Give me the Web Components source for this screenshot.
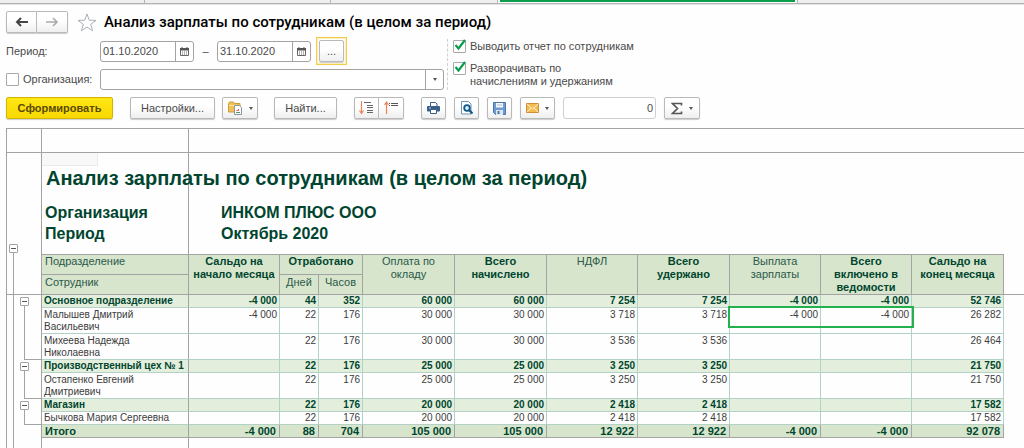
<!DOCTYPE html>
<html lang="ru">
<head>
<meta charset="utf-8">
<title>Анализ зарплаты по сотрудникам</title>
<style>
html,body{margin:0;height:100%}
body{font:11px/13px "Liberation Sans",Arial,sans-serif;color:#4a4a4a;background:#fefefe}
</style>
</head>
<body>
<salary-app></salary-app>
<script>
const define = (name, html, init) => {
  const tpl = document.createElement('template');
  tpl.innerHTML = html;
  customElements.define(name, class extends HTMLElement {
    constructor() {
      super();
      this.attachShadow({mode: 'open'}).append(tpl.content.cloneNode(true));
    }
    connectedCallback() { if (init) init.call(this, this.shadowRoot); }
  });
};

/* Strip of open windows above the form */
define('window-tabs', `
<style>
:host{display:flex;height:3px;background:#efefef;border-bottom:1px solid #b4b4b4;box-shadow:0 1px #e4e4e4}
i{box-sizing:border-box;flex:0 0 145px;border-right:1px solid #b4b4b4}
i.w{flex-basis:186px}
i.s{flex-basis:167px}
i.on{flex:0 0 300px;background:linear-gradient(#0b9c4c,#0b9c4c) 2px 0/calc(100% - 4px) 2px no-repeat,#fefefe}
</style><i></i><i class="w"></i><i class="s"></i><i class="on"></i>`);

/* Push button with a slot for its caption or icon */
define('tool-button', `
<style>
:host{display:block;flex:none}
button{box-sizing:border-box;width:100%;height:22px;padding:0 3px;display:flex;align-items:center;justify-content:center;gap:4px;
 font:inherit;color:#4a4a4a;background:linear-gradient(#fff 40%,#efefef);border:1px solid #b9b9b9;border-radius:2px;box-shadow:0 1px 1px #ccc}
:host([primary]) button{font-weight:bold;color:#5a4a00;background:linear-gradient(#ffe716,#f8d800);border-color:#d3b500}
:host([left]) button{border-radius:2px 0 0 2px}
:host([right]) button{border-radius:0 2px 2px 0;border-left:0}
.a{display:none;width:0;height:0;border:2px solid transparent;border-top:3px solid #555;border-bottom:0;margin-left:2px}
:host([menu]) .a{display:block}
</style><button type="button"><slot></slot><span class="a"></span></button>`,
function (r) {
  const t = this.getAttribute('title');
  if (t) r.querySelector('button').setAttribute('aria-label', t);
});

define('date-field', `
<style>
:host{box-sizing:border-box;display:flex;width:94px;height:21px;border:1px solid #a3a3a3;border-radius:3px;background:#fff;overflow:hidden}
input{flex:1;min-width:0;border:0;padding:0 0 0 2px;font:inherit;color:#4a4a4a;background:none;outline:0}
button{flex:0 0 18px;border:0;border-left:1px solid #a3a3a3;padding:0;background:none;display:grid;place-items:center}
</style><input type="text"><button type="button" aria-label="Календарь"><svg width="9" height="9" viewBox="0 0 9 9"><path d="M.5 1.5h8v7h-8z" fill="#fff" stroke="#666"/><path d="M0 1h9v2.5H0z" fill="#555"/><path d="M2 0v2M7 0v2" stroke="#555"/><path d="M2 5h5M2 7h5" stroke="#666" stroke-dasharray="1"/></svg></button>`,
function (r) {
  const i = r.querySelector('input');
  i.value = this.getAttribute('value');
  i.setAttribute('aria-label', this.getAttribute('label'));
});

define('check-field', `
<style>
:host{display:block}
label{display:flex;align-items:flex-start;gap:4px}
.b{position:relative;flex:0 0 13px;height:13px}
input{appearance:none;box-sizing:border-box;display:block;width:13px;height:13px;margin:0;border:1px solid #a9a9a9;border-radius:1px;background:#fff}
svg{display:none;position:absolute;left:1px;top:-1px;pointer-events:none}
input:checked+svg{display:block}
</style><label><span class="b"><input type="checkbox"><svg width="13" height="12" viewBox="0 0 13 12"><path d="M1.5 6l3 3.5L11 1" fill="none" stroke="#0b9c4c" stroke-width="2.2"/></svg></span><span><slot></slot></span></label>`,
function (r) { r.querySelector('input').checked = this.hasAttribute('checked'); });

define('report-header', `
<style>
:host{display:flex;align-items:center;padding:7px 6px 0}
.nav{display:flex;width:62px}
.nav tool-button{flex:1}
.star{margin:0 7px 0 9px;padding:0;border:0;background:none;display:flex}
h1{margin:0;font:500 15px/20px Roboto,"Liberation Sans",sans-serif;color:#000}
</style>
<div class="nav">
<tool-button left title="Назад"><svg width="14" height="10" viewBox="0 0 14 10"><path d="M13 5H3M6 1L2 5l4 4" fill="none" stroke="#444" stroke-width="2"/></svg></tool-button>
<tool-button right title="Вперед"><svg width="14" height="10" viewBox="0 0 14 10"><path d="M1 5h10M8 1l4 4-4 4" fill="none" stroke="#aaa" stroke-width="1.6"/></svg></tool-button>
</div>
<button class="star" type="button" aria-label="В избранное"><svg width="20" height="19" viewBox="0 0 20 19"><path d="M10 1l2.3 6.2 6.700.2-5.300 4 1.900 6.400L10 14l-5.600 3.800 1.900-6.400-5.300-4 6.700-.2z" fill="#fff" stroke="#a8b0b8"/></svg></button>
<h1>Анализ зарплаты по сотрудникам (в целом за период)</h1>`);

define('report-filters', `
<style>
:host{display:flex;padding:4px 6px 0}
.l{display:grid;grid-template-columns:94px 344px;grid-template-rows:28px 21px;row-gap:4px;align-items:center}
.row{display:flex;align-items:center}
.dash{width:23px;text-align:center}
.hot{margin-left:5px;padding:2px;border:1px solid #f2cd4a;box-shadow:inset 0 0 0 1px #fdf0bd}
.hot tool-button{width:25px}
select{appearance:none;box-sizing:border-box;width:100%;height:21px;border:1px solid #a3a3a3;border-radius:3px;font:inherit;
 background:linear-gradient(#a3a3a3,#a3a3a3) right 17px top/1px 100% no-repeat,#fff}
.sel{position:relative}
.sel::after{content:"";position:absolute;right:7px;top:9px;border:2px solid transparent;border-top:3px solid #555;border-bottom:0}
.r{display:flex;flex-direction:column;gap:9px;margin:2px 0 0 3px;padding:1px 0 0 5px;border-left:1px dashed #d0d0d0}
</style>
<div class="l">
 <span>Период:</span>
 <div class="row"><date-field label="Начало периода" value="01.10.2020"></date-field><span class="dash">–</span><date-field label="Конец периода" value="31.10.2020"></date-field><div class="hot"><tool-button>...</tool-button></div></div>
 <check-field>Организация:</check-field>
 <div class="sel"><select aria-label="Организация"><option></option></select></div>
</div>
<div class="r">
 <check-field checked>Выводить отчет по сотрудникам</check-field>
 <check-field checked>Разворачивать по<br>начислениям и удержаниям</check-field>
</div>`);

define('report-toolbar', `
<style>
:host{display:flex;align-items:center;padding:7px 6px 9px}
.n{box-sizing:border-box;width:93px;height:22px;margin-right:8px;border:1px solid #cfcfcf;border-radius:3px;padding:0 2px;text-align:right;font:inherit;color:#4a4a4a;background:#fff}
.w0{width:107px;margin-right:17px}.w1{width:85px;margin-right:7px}.w2{width:36px;margin-right:16px}.w3{width:63px;margin-right:17px}
.w4{width:25px}.g{margin-right:17px}.w5{width:25px;margin-right:8px}.w6{width:35px;margin-right:8px}.w7{width:36px}
</style>
<tool-button class="w0" primary>Сформировать</tool-button>
<tool-button class="w1">Настройки...</tool-button>
<tool-button class="w2" menu title="Варианты"><svg width="15" height="14" viewBox="0 0 15 14"><path d="M.5 2.500l1-1.500h4l1 1.500h5.500v8.500H.5z" fill="#eec25a" stroke="#cf9a35"/><path d="M1 4.500h10" stroke="#fbe3a4"/><path d="M6.500 4.500h5l2 2v7h-7z" fill="#fff" stroke="#8796a5"/><path d="M8 11.500h4" stroke="#4b9b62"/><path d="M8.500 9.500h2v-1.500" stroke="#d9534f" fill="none"/></svg></tool-button>
<tool-button class="w3">Найти...</tool-button>
<tool-button class="w4" left title="Развернуть группы"><svg width="15" height="14" viewBox="0 0 15 14"><path d="M2.500 0v12M.5 9.500l2 3 2-3" fill="none" stroke="#ee8456" stroke-width="1.200"/><path d="M5 1.500h7M8 4.500h6M8 6.500h6M8 9.500h6M8 11.500h6" stroke="#666"/></svg></tool-button>
<tool-button class="w4 g" right title="Свернуть группы"><svg width="15" height="14" viewBox="0 0 15 14"><path d="M2.500 13V1M.5 4l2-3 2 3" fill="none" stroke="#ee8456" stroke-width="1.200"/><path d="M5 2.500h1M7 2.500h7M5 4.500h1M7 4.500h7" stroke="#555"/></svg></tool-button>
<tool-button class="w5" title="Печать"><svg width="13" height="12" viewBox="0 0 13 12"><path d="M3.500.5h5l1.500 1.500v3H3.500z" fill="#fff" stroke="#38618a"/><rect y="4" width="13" height="5.500" rx="1" fill="#38618a"/><path d="M2 6h2" stroke="#c7d9ea"/><path d="M3.500 7.500h6v4h-6z" fill="#fff" stroke="#38618a"/></svg></tool-button>
<tool-button class="w5" title="Предварительный просмотр"><svg width="13" height="14" viewBox="0 0 13 14"><path d="M1.500.5h7l2.500 2.500v10H1.500z" fill="#fff" stroke="#6f93b3"/><circle cx="7" cy="7" r="2.800" fill="#dff0fa" stroke="#0d5687" stroke-width="1.800"/><path d="M9 9l3.500 3.500" stroke="#0d5687" stroke-width="2.200"/></svg></tool-button>
<tool-button class="w5" title="Сохранить"><svg width="13" height="13" viewBox="0 0 13 13"><path d="M.5.5h12v12h-10l-2-2z" fill="#6f9bd0" stroke="#4a76ab"/><path d="M3 1h7v4.500H3z" fill="#f4f8fc"/><path d="M4 3h5" stroke="#a9bfd6"/><path d="M3 8h7v5H3z" fill="#dce7f2"/><path d="M4.500 9h2v3h-2z" fill="#4a76ab"/></svg></tool-button>
<tool-button class="w6" menu title="Отправить"><svg width="13" height="10" viewBox="0 0 13 10"><path d="M.5.5h12v9H.5z" fill="#f4bd52" stroke="#d0903a"/><path d="M1 1l5.500 5L12 1M1 9l4-4M12 9L8 5" fill="none" stroke="#fff1c9"/></svg></tool-button>
<input class="n" type="text" value="0" aria-label="Сумма">
<tool-button class="w7" menu title="Показатель"><svg width="12" height="13" viewBox="0 0 12 13"><path d="M10.500 3.500V1.500H1.500l5 5-5 5h9v-2" fill="none" stroke="#555" stroke-width="1.600"/></svg></tool-button>`);

/* Tree toggle in the outline gutter */
define('group-toggle', `
<style>
:host{display:block;width:9px;height:9px}
button{box-sizing:border-box;display:grid;place-items:center;width:9px;height:9px;padding:0;border:1px solid #a3a3a3;border-radius:1px;background:#fff}
i{width:5px;height:1px;background:#555}
</style><button type="button" aria-label="Свернуть группу"><i></i></button>`);

define('report-table', `
<style>
:host{display:block}
table{table-layout:fixed;width:100%;border-spacing:0}
th,td{box-sizing:border-box;padding:0 2px;border:solid #b3d2c5;border-width:0 1px 1px 0;text-align:right;vertical-align:top;font-weight:normal;line-height:12px;white-space:nowrap}
td.t,th.t{position:relative;padding:2px 0 0 1px;border:0;border-right:1px solid #a3a3a3}
td.t::before{content:"";position:absolute;left:5px;top:7px;right:0;bottom:0;border:solid #a3a3a3;border-width:0 0 1px 1px}
td.t group-toggle{position:relative}
th.n{text-align:left;border-right-color:#a3a3a3}
thead th{height:20px;background:#d7e5cc;border-color:#a3a3a3;color:#2a594a;text-align:center;line-height:13px;padding:1px 0 0}
thead tr:first-child th{height:21px;border-top-width:1px;padding-top:0}
thead th.n{padding:1px 0 0 3px}
thead th.b{font-weight:bold;color:#00452f}
thead th.t{background:none;border-bottom:1px solid #a3a3a3;border-top:0}
thead tr:first-child th.f{background:none;border-width:0 0 1px}
tbody th,tbody td{font-size:10px;color:#3c3c3c}
tbody td{height:13px}
tbody .e.two>*{height:26px;padding-top:1px}
tbody .g>:not(.t){background:#e3efdc;font-weight:bold;color:#00452f}
tfoot>tr>*{height:13px;font-size:11px;font-weight:bold;color:#00452f;background:#d7e5cc;border-color:#a3a3a3;padding:0 3px}
tfoot>tr>th.t{background:none;padding:0}
.hl{position:absolute;left:-2px;top:-2px;box-sizing:border-box;width:calc(200% + 6px);height:22px;border:2px solid #22b14c;pointer-events:none}
.rel{position:relative}
</style>
<table>
<colgroup></colgroup>
<thead>
<tr><th class="t" rowspan="2"></th><th class="n">Подразделение</th><th class="b" rowspan="2">Сальдо на<br>начало месяца</th><th class="b" colspan="2">Отработано</th><th rowspan="2">Оплата по<br>окладу</th><th class="b" rowspan="2">Всего<br>начислено</th><th rowspan="2">НДФЛ</th><th class="b" rowspan="2">Всего<br>удержано</th><th rowspan="2">Выплата<br>зарплаты</th><th class="b" rowspan="2">Всего<br>включено в<br>ведомости</th><th class="b" rowspan="2">Сальдо на<br>конец месяца</th><th class="f" rowspan="2"></th></tr>
<tr><th class="n">Сотрудник</th><th>Дней</th><th>Часов</th></tr>
</thead>
</table>`,
function (r) {
  r.querySelector('colgroup').innerHTML = [23,147,91,39,44,92,92,91,92,91,91,92].map(w => `<col style="width:${w}px">`).join('') + '<col>';
  const m = '-4 000';
  const groups = [
    [['Основное подразделение', m,'44','352','60 000','60 000','7 254','7 254',m,m,'52 746'],
     ['Малышев Дмитрий<br>Васильевич', m,'22','176','30 000','30 000','3 718','3 718',m,m,'26 282'],
     ['Михеева Надежда<br>Николаевна','','22','176','30 000','30 000','3 536','3 536','','','26 464']],
    [['Производственный цех № 1','','22','176','25 000','25 000','3 250','3 250','','','21 750'],
     ['Остапенко Евгений<br>Дмитриевич','','22','176','25 000','25 000','3 250','3 250','','','21 750']],
    [['Магазин','','22','176','20 000','20 000','2 418','2 418','','','17 582'],
     ['Бычкова Мария Сергеевна','','22','176','20 000','20 000','2 418','2 418','','','17 582']]
  ];
  const cells = (row, mark) => row.map((v, i) => i ? (mark && i === 8 ? `<td class="rel">${v}<span class="hl"></span></td>` : `<td>${v}</td>`) : `<th class="n" scope="row">${v}</th>`).join('');
  const body = groups.map((g, k) => '<tbody>' + g.map((row, i) => {
    const cls = i ? 'e' + (row[0].includes('<br>') ? ' two' : '') : 'g';
    const gut = i ? '' : `<td class="t" rowspan="${g.length}"><group-toggle></group-toggle></td>`;
    return `<tr class="${cls}">${gut}${cells(row, k === 0 && i === 1)}</tr>`;
  }).join('') + '</tbody>').join('');
  const total = ['Итого', m,'88','704','105 000','105 000','12 922','12 922',m,m,'92 078'];
  r.querySelector('table').insertAdjacentHTML('beforeend', body + `<tfoot><tr><th class="t"></th>${cells(total)}</tr></tfoot>`);
});

define('report-sheet', `
<style>
:host{display:flex;flex-direction:column;margin-left:6px;border:solid #a3a3a3;border-width:1px 0 0 1px;
 background:linear-gradient(#a3a3a3,#a3a3a3) 34px 0/1px 100% no-repeat,linear-gradient(#a3a3a3,#a3a3a3) 181px 0/1px 100% no-repeat,#fefefe}
.strip{height:23px;border-bottom:1px solid #a3a3a3}
.body{display:flex;flex:1}
.gut{flex:0 0 12px;display:flex;flex-direction:column;background:linear-gradient(#a3a3a3,#a3a3a3) 0 141px/100% 1px no-repeat}
group-toggle{margin:91px 0 0 2px}
.line{flex:1;width:1px;margin-left:6px;background:#a3a3a3}
.main{flex:1;min-width:0}
.top{box-sizing:border-box;height:101px;padding-left:26px;color:#00452f;font-weight:bold}
.cur{box-sizing:border-box;width:56px;height:13px;margin-left:-3px;background:#f8f8f8;border:solid #ececec;border-width:0 1px 1px 0}
h2{margin:0 0 12px;font-size:20px;line-height:24px;padding-left:1px;white-space:nowrap}
dl{margin:0;display:grid;grid-template-columns:176px 1fr;font-size:16px;line-height:21px}
dd{margin:0}
</style>
<div class="strip"></div>
<div class="body">
 <div class="gut"><group-toggle></group-toggle><div class="line"></div></div>
 <div class="main">
  <div class="top"><div class="cur"></div><h2>Анализ зарплаты по сотрудникам (в целом за период)</h2>
  <dl><dt>Организация</dt><dd>ИНКОМ ПЛЮС ООО</dd><dt>Период</dt><dd>Октябрь 2020</dd></dl></div>
  <report-table></report-table>
 </div>
</div>`);

define('salary-app', `
<style>
:host{display:flex;flex-direction:column;min-height:100%}
report-sheet{flex:1}
</style>
<window-tabs></window-tabs>
<report-header></report-header>
<report-filters></report-filters>
<report-toolbar></report-toolbar>
<report-sheet></report-sheet>`);
</script>
</body>
</html>
